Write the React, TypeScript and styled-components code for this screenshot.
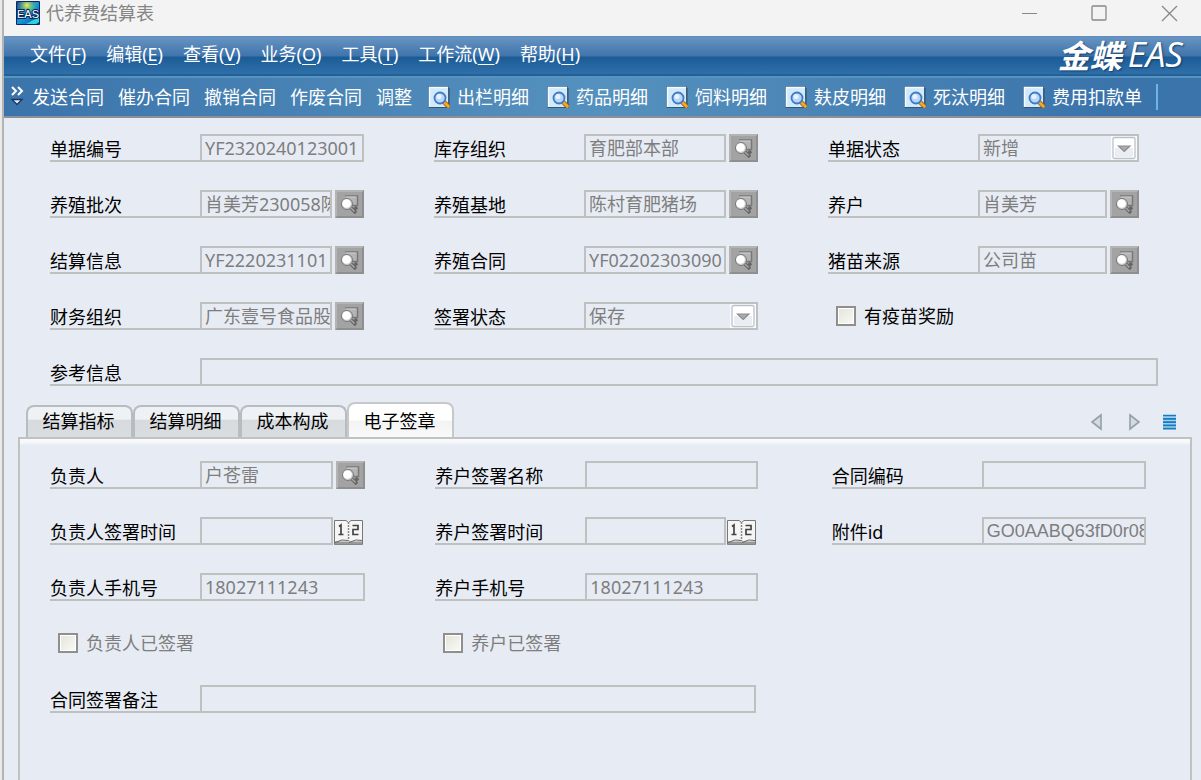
import React from "react";
import styled, { createGlobalStyle, css } from "styled-components";

const GlobalStyle = createGlobalStyle`
  *, *::before, *::after { box-sizing: border-box; }
  html, body, #root { height: 100%; }
  body {
    margin: 0;
    background: #e9e9e9;
    color: #000;
    font-family: "Noto Sans", "Noto Sans CJK SC", sans-serif;
    font-size: 18px;
    line-height: 28px;
  }
  button, input, select { font: inherit; margin: 0; border-radius: 0; }
`;

const Window = styled.div`
  min-height: 100%;
  margin-left: 2px;
  border-left: 2px solid #b4b4b4;
  background: #e7ecf4;
  display: flex;
  flex-direction: column;
`;

const TitleBar = styled.header`
  height: 36px;
  padding: 0 23px 11px 12px;
  background: #f3f3f3;
  display: flex;
  align-items: center;
  gap: 6px;
`;

const Title = styled.h1`
  flex: 1;
  margin: 0;
  font-size: 18px;
  font-weight: 400;
  line-height: 26px;
  color: #858585;
`;

const WindowButtons = styled.div`
  display: flex;
  gap: 52px;
`;

const WindowButton = styled.button`
  width: 18px;
  height: 18px;
  padding: 0;
  border: 0;
  background: none;
  svg { display: block; }
`;

const MenuBar = styled.nav`
  height: 42px;
  padding: 0 18px 4px 26px;
  display: flex;
  align-items: center;
  gap: 20px;
  background: linear-gradient(#5c8dbc 0, #6592c1 2px, #3f74ac 20px, #1b5c97 21px, #3071ac 39px);
  border-bottom: 2px solid #5594c0;
  box-shadow: inset 0 -2px 0 #245f96;
`;

const MenuButton = styled.button`
  padding: 0;
  border: 0;
  background: none;
  color: #fff;
  line-height: 32px;
  white-space: nowrap;
  u { text-underline-offset: 3px; }
`;

const Brand = styled.div`
  margin-left: auto;
  display: flex;
  align-items: center;
  gap: 6px;
  color: #fff;
  line-height: 36px;
  text-shadow: 1px 1px 2px #123e6c;
`;

const BrandName = styled.span`
  font: italic 700 32px/36px "Noto Sans CJK SC", sans-serif;
`;

const BrandProduct = styled.span`
  font: italic 400 35px/36px "Open Sans", sans-serif;
`;

const ToolBar = styled.div`
  height: 40px;
  padding: 0 8px 0 6px;
  display: flex;
  align-items: center;
  gap: 14px;
  border-bottom: 2px solid #8c9197;
  background: linear-gradient(90deg, #3b74ab, #5591be 50%, #3b74ab 92%);
`;

const ToolGroup = styled.div`
  display: flex;
  align-items: center;
  gap: 18px;
  padding-left: 2px;
`;

const ToolButton = styled.button`
  padding: 0;
  border: 0;
  background: none;
  color: #fff;
  display: flex;
  align-items: center;
  gap: 7px;
  white-space: nowrap;
  svg { display: block; }
`;

const Expander = styled(ToolButton)`
  margin-right: -7px;
`;

const ToolDivider = styled.span`
  width: 2px;
  height: 26px;
  margin-left: -4px;
  background: #6fb4e4;
`;

const Form = styled.main`
  flex: 1;
  padding-top: 16px;
  display: flex;
  flex-direction: column;
`;

const FieldGrid = styled.div`
  display: grid;
  grid-template-columns: minmax(0, 314fr) minmax(0, 324fr) minmax(0, 311fr);
  grid-auto-rows: 28px;
  gap: 28px 70px;
`;

const HeaderFields = styled(FieldGrid)`
  padding: 0 62px 0 46px;
`;

const ReferenceRow = styled.div`
  padding: 28px 43px 0 46px;
`;

const FieldBox = styled.div<{ $span?: number }>`
  grid-column: span ${(p) => p.$span ?? 1};
  display: flex;
  min-width: 0;
  height: 28px;
`;

const Label = styled.label`
  flex: 0 0 150px;
  padding-top: 2px;
  border-bottom: 2px solid #bfc0c0;
  white-space: nowrap;
  line-height: 26px;
`;

const box = css`
  flex: 1;
  min-width: 0;
  width: 100%;
  height: 28px;
  border: 2px solid #bfc0c0;
  background: #e7ecf4;
  color: #7e7e7e;
  opacity: 1;
`;

const TextInput = styled.input<{ $plain?: boolean }>`
  ${box}
  padding: 0 0 0 3px;
  ${(p) => p.$plain && css`font-family: "Liberation Sans", sans-serif;`}
`;

const SelectWrap = styled.div`
  position: relative;
  flex: 1;
  display: flex;
  min-width: 0;
`;

const SelectInput = styled.select`
  ${box}
  appearance: none;
  padding: 0 30px 0 3px;
  line-height: 22px;
`;

const SelectArrow = styled.span`
  position: absolute;
  top: 2px;
  right: 2px;
  width: 26px;
  height: 24px;
  background: #fbfcfd;
  pointer-events: none;
  svg { display: block; }
`;

const LookupButton = styled.button`
  flex: 0 0 29px;
  height: 28px;
  margin-left: 3px;
  padding: 0;
  border: 2px solid;
  border-color: #b4b4b4 #8f8f8f #8f8f8f #b4b4b4;
  background: #a3a3a3;
  svg { display: block; }
`;

const DateButton = styled.button`
  flex: 0 0 32px;
  height: 28px;
  padding: 1px 0 0 1px;
  border: 0;
  background: none;
  svg { display: block; }
`;

const CheckLabel = styled.label<{ $muted?: boolean }>`
  display: flex;
  align-items: center;
  gap: 8px;
  padding-left: 8px;
  white-space: nowrap;
  color: ${(p) => (p.$muted ? "#7e7e7e" : "#000")};
`;

const CheckInput = styled.input`
  appearance: none;
  width: 20px;
  height: 20px;
  border: 2px solid #8f8f8b;
  background: linear-gradient(135deg, #e4e4dc, #fafaf6);
  box-shadow: inset 0 0 0 1px #fff;
`;

const TabArea = styled.section`
  flex: 1;
  margin: 16px 9px 0 14px;
  display: flex;
  flex-direction: column;
`;

const TabStrip = styled.div`
  height: 35px;
  padding: 0 12px 0 8px;
  display: flex;
  align-items: flex-end;
`;

const Tab = styled.button<{ $active?: boolean }>`
  width: 107px;
  height: ${(p) => (p.$active ? 37 : 32)}px;
  margin-bottom: ${(p) => (p.$active ? -2 : 0)}px;
  padding: 0 2px 2px 0;
  border: 2px solid ${(p) => (p.$active ? "#c6c8ca" : "#b7bcc2")};
  border-bottom: 0;
  border-radius: 8px 8px 0 0;
  background: ${(p) =>
    p.$active
      ? "linear-gradient(#fff 45%, #f3f3f4 50%, #fafafa)"
      : "linear-gradient(#eff2f4 40%, #d7dbdf 45%, #dadddf)"};
  color: #000;
`;

const TabTools = styled.div`
  align-self: center;
  margin: 4px 0 0 auto;
  display: flex;
  gap: 19px;
`;

const Panel = styled.div`
  flex: 1;
  padding: 22px 44px 24px 30px;
  border: 2px solid #bfc1c3;
  border-bottom: 0;
  background: linear-gradient(#fafbfc 0, #f4f6f9 4px, #e7ecf4 6px);
`;

/* The middle column and the remark line stop short of the third column. */
const PanelFields = styled(FieldGrid)`
  grid-template-columns: minmax(0, 315fr) minmax(0, 326fr) minmax(0, 314fr);
  & > :nth-child(3n + 2) { margin-right: 4px; }
  & > :last-child { margin-right: 6px; }
`;

const AppIcon = () => (
  <svg width="24" height="24" viewBox="0 0 24 24" aria-hidden="true">
    <defs>
      <linearGradient id="app" x1="0" y1="0" x2="1" y2="1">
        <stop offset="0" stopColor="#0c3b9c" />
        <stop offset=".5" stopColor="#1898d8" />
        <stop offset="1" stopColor="#06489c" />
      </linearGradient>
      <radialGradient id="glow" cx=".45" cy=".15" r=".5">
        <stop offset="0" stopColor="#f2ef55" />
        <stop offset="1" stopColor="#4cc66b" stopOpacity="0" />
      </radialGradient>
    </defs>
    <rect width="24" height="24" rx="1" fill="#0a2668" />
    <rect x="1" y="1" width="22" height="22" fill="url(#app)" />
    <rect x="1" y="1" width="22" height="22" fill="url(#glow)" />
    <path d="M10 23l13-7v5l-3 2z" fill="#2fd2d8" />
    <text x="12" y="17" textAnchor="middle" fontFamily="Liberation Sans, sans-serif" fontSize="11" fill="#fff" stroke="#06285e" strokeWidth="2" paintOrder="stroke">EAS</text>
  </svg>
);

const DetailIcon = () => (
  <svg width="22" height="22" viewBox="0 0 22 22" aria-hidden="true">
    <rect x=".5" y=".5" width="20" height="21" fill="#cfeafb" stroke="#466f96" />
    <path d="M1.500 21V1.500H20" fill="none" stroke="#f4fbff" strokeWidth="1.500" />
    <path d="M1 21.500h20V2" fill="none" stroke="#38546f" strokeWidth="1.200" />
    <path d="M16.500 16.500l4 4" stroke="#8a5a10" strokeWidth="4.500" strokeLinecap="round" />
    <path d="M16.500 16.500l3.800 3.800" stroke="#f0a92c" strokeWidth="3" strokeLinecap="round" />
    <circle cx="12" cy="12" r="5.500" fill="#b8d8fb" stroke="#4478c4" strokeWidth="1.800" />
    <circle cx="11" cy="10.500" r="2.500" fill="#e7f4ff" />
  </svg>
);

const LookupIcon = () => (
  <svg width="25" height="24" viewBox="0 0 25 24" aria-hidden="true">
    <path d="M8 4h12.500v9.500H13" fill="#b4b4b4" stroke="#787878" strokeWidth="1.500" />
    <path d="M8.500 5h11" stroke="#d0d0d0" />
    <path d="M13 15l6 6M20 15l-4 4" stroke="#666" strokeWidth="3.500" />
    <path d="M13.500 15.500l4 4" stroke="#a8a8a8" strokeWidth="1.500" />
    <circle cx="10" cy="12" r="5.500" fill="#cfcfcf" stroke="#777" />
    <circle cx="9.500" cy="11.500" r="4.300" fill="#fff" />
  </svg>
);

const DateIcon = () => (
  <svg width="29" height="26" viewBox="0 0 29 26" aria-hidden="true">
    <path d="M.5 1.500H12l2.500 2 2.500-2h11.500v24H.5z" fill="#f5f5f5" stroke="#777" />
    <path d="M1 22.500h27v3H1z" fill="#999" />
    <path d="M1 23.500q7-4 13.500-2M15 23.500q7-4 13-2" fill="none" stroke="#666" />
    <path d="M14.500 3v19" stroke="#888" strokeWidth="1.500" strokeDasharray="2 1" />
    <path d="M5 7.500l2-1.500v9.500M4.500 15.500h5M18.500 6.500h5.500v4h-5v5h5.500" fill="none" stroke="#444" strokeWidth="1.700" />
  </svg>
);

const DropIcon = () => (
  <svg width="26" height="24" viewBox="0 0 26 24" aria-hidden="true">
    <rect x="2" y="1.500" width="22" height="21" rx="1.500" fill="#fff" stroke="#b9c2cc" strokeWidth="1.300" />
    <path d="M4 12h18v9H4z" fill="#eaedf1" />
    <path d="M7.500 10h11.500l-5.800 5.500z" fill="#a9aaab" stroke="#8c8c8c" strokeWidth="1.200" />
  </svg>
);

type FieldProps = {
  label: string;
  value?: string;
  kind?: "text" | "lookup" | "select" | "date";
  span?: number;
  plain?: boolean;
};

function Field({ label, value = "", kind = "text", span, plain }: FieldProps) {
  const id = `field-${label}`;
  return (
    <FieldBox $span={span}>
      <Label htmlFor={id}>{label}</Label>
      {kind === "select" ? (
        <SelectWrap>
          <SelectInput id={id} disabled defaultValue={value}>
            <option>{value}</option>
          </SelectInput>
          <SelectArrow><DropIcon /></SelectArrow>
        </SelectWrap>
      ) : (
        <TextInput id={id} readOnly value={value} $plain={plain} />
      )}
      {kind === "lookup" && <LookupButton type="button" aria-label={`查找${label}`}><LookupIcon /></LookupButton>}
      {kind === "date" && <DateButton type="button" aria-label={`选择${label}`}><DateIcon /></DateButton>}
    </FieldBox>
  );
}

function Check({ label, muted }: { label: string; muted?: boolean }) {
  return (
    <CheckLabel $muted={muted}>
      <CheckInput type="checkbox" disabled={muted} />
      {label}
    </CheckLabel>
  );
}

const menus = [
  ["文件", "F"], ["编辑", "E"], ["查看", "V"], ["业务", "O"],
  ["工具", "T"], ["工作流", "W"], ["帮助", "H"],
];
const actions = ["发送合同", "催办合同", "撤销合同", "作废合同", "调整"];
const details = ["出栏明细", "药品明细", "饲料明细", "麸皮明细", "死汰明细", "费用扣款单"];
const tabs = ["结算指标", "结算明细", "成本构成", "电子签章"];

export default function App() {
  return (
    <>
      <GlobalStyle />
      <Window>
        <TitleBar>
          <AppIcon />
          <Title>代养费结算表</Title>
          <WindowButtons>
            <WindowButton type="button" aria-label="最小化">
              <svg width="18" height="18"><path d="M2 9.500h15" stroke="#888" /></svg>
            </WindowButton>
            <WindowButton type="button" aria-label="最大化">
              <svg width="18" height="18"><rect x="2" y="2" width="14" height="14" rx="1" fill="none" stroke="#888" strokeWidth="1.300" /></svg>
            </WindowButton>
            <WindowButton type="button" aria-label="关闭">
              <svg width="18" height="18"><path d="M2 2l15 15M17 2L2 17" stroke="#888" strokeWidth="1.300" /></svg>
            </WindowButton>
          </WindowButtons>
        </TitleBar>

        <MenuBar>
          {menus.map(([name, key]) => (
            <MenuButton type="button" key={key}>{name}(<u>{key}</u>)</MenuButton>
          ))}
          <Brand>
            <BrandName>金蝶</BrandName>
            <BrandProduct>EAS</BrandProduct>
          </Brand>
        </MenuBar>

        <ToolBar>
          <Expander type="button" aria-label="展开工具栏">
            <svg width="15" height="22" viewBox="0 0 15 22">
              <path d="M2 1l4 4-4 4M8 1l4 4-4 4" fill="none" stroke="#fff" strokeWidth="2" />
              <path d="M2 13.500h10l-5 5z" fill="#e5eaf1" stroke="#17365f" strokeWidth="1.300" />
            </svg>
          </Expander>
          {actions.map((name) => <ToolButton type="button" key={name}>{name}</ToolButton>)}
          <ToolGroup>
            {details.map((name) => (
              <ToolButton type="button" key={name}><DetailIcon />{name}</ToolButton>
            ))}
            <ToolDivider />
          </ToolGroup>
        </ToolBar>

        <Form>
          <HeaderFields>
            <Field label="单据编号" value="YF2320240123001" />
            <Field label="库存组织" value="育肥部本部" kind="lookup" />
            <Field label="单据状态" value="新增" kind="select" />
            <Field label="养殖批次" value="肖美芳230058陈村" kind="lookup" />
            <Field label="养殖基地" value="陈村育肥猪场" kind="lookup" />
            <Field label="养户" value="肖美芳" kind="lookup" />
            <Field label="结算信息" value="YF2220231101" kind="lookup" />
            <Field label="养殖合同" value="YF02202303090" kind="lookup" />
            <Field label="猪苗来源" value="公司苗" kind="lookup" />
            <Field label="财务组织" value="广东壹号食品股" kind="lookup" />
            <Field label="签署状态" value="保存" kind="select" />
            <Check label="有疫苗奖励" />
          </HeaderFields>
          <ReferenceRow>
            <Field label="参考信息" />
          </ReferenceRow>

          <TabArea>
            <TabStrip role="tablist">
              {tabs.map((name, i) => (
                <Tab type="button" role="tab" key={name} aria-selected={i === 3} $active={i === 3}>{name}</Tab>
              ))}
              <TabTools>
                <WindowButton type="button" aria-label="上一页">
                  <svg width="18" height="18"><path d="M13 2v14L4 9z" fill="#d5dade" stroke="#93a0a8" strokeWidth="1.600" /></svg>
                </WindowButton>
                <WindowButton type="button" aria-label="下一页">
                  <svg width="18" height="18"><path d="M5 2v14l9-7z" fill="#d5dade" stroke="#93a0a8" strokeWidth="1.600" /></svg>
                </WindowButton>
                <WindowButton type="button" aria-label="全部页签">
                  <svg width="18" height="18">
                    <rect x="1" y="2" width="13" height="14" fill="#9fd0f2" />
                    <path d="M1 2.500h13M1 5.800h13M1 9.100h13M1 12.400h13M1 15.700h13" stroke="#1879bd" strokeWidth="1.700" />
                  </svg>
                </WindowButton>
              </TabTools>
            </TabStrip>
            <Panel role="tabpanel">
              <PanelFields>
                <Field label="负责人" value="户苍雷" kind="lookup" />
                <Field label="养户签署名称" />
                <Field label="合同编码" />
                <Field label="负责人签署时间" kind="date" />
                <Field label="养户签署时间" kind="date" />
                <Field label="附件id" value="GO0AABQ63fD0r08" plain />
                <Field label="负责人手机号" value="18027111243" />
                <Field label="养户手机号" value="18027111243" />
                <span />
                <Check label="负责人已签署" muted />
                <Check label="养户已签署" muted />
                <span />
                <Field label="合同签署备注" span={2} />
              </PanelFields>
            </Panel>
          </TabArea>
        </Form>
      </Window>
    </>
  );
}
